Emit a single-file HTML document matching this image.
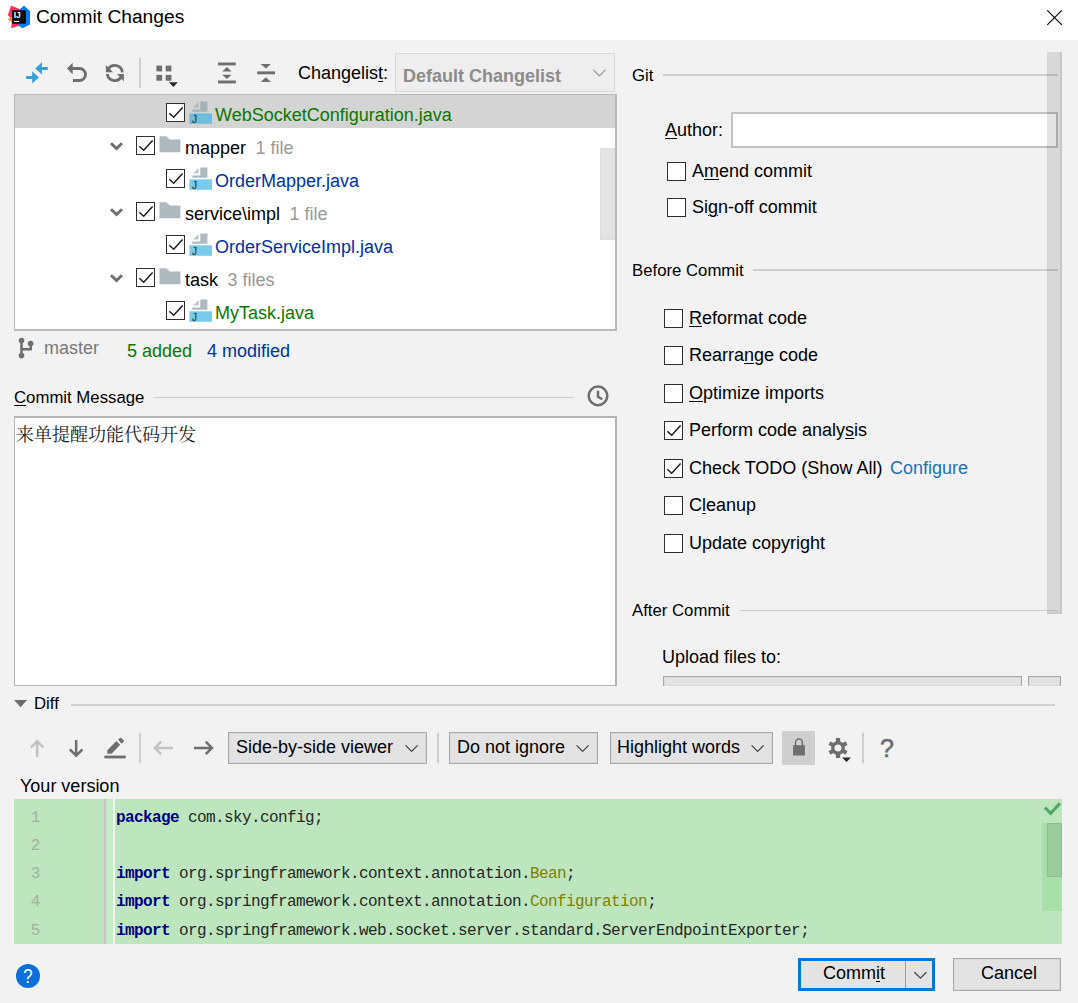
<!DOCTYPE html>
<html><head><meta charset="utf-8"><title>Commit Changes</title>
<style>
*{box-sizing:border-box;margin:0;padding:0}
html,body{width:1078px;height:1003px;overflow:hidden;background:#f2f2f2}
body{position:relative;font-family:"Liberation Sans","Noto Sans CJK SC",sans-serif;font-size:18px;color:#000}
.a{position:absolute}
.t{position:absolute;white-space:nowrap;line-height:22px;height:22px}
.s{font-size:16.750px}
.u{text-decoration:underline;text-underline-offset:2px;text-decoration-thickness:1px}
.hl{position:absolute;height:2px;background:#cfcfcf}
.h1{height:1px;background:#cdcdcd}
.cb{position:absolute;width:19px;height:19px;background:#fff;border:1px solid #2e2e2e}
.g{color:#0a7700}.b{color:#0032a0}.gr{color:#999}
.combo{position:absolute;background:#e3e3e3;border:1px solid #a9a9a9;box-shadow:inset 0 0 0 1px #d9d9d9}
.sep{position:absolute;width:2px;height:30px;background:#cecece}
.code{position:absolute;left:116px;font-family:"Liberation Mono",monospace;font-size:16px;letter-spacing:-0.600px;line-height:20px;height:20px;white-space:pre;color:#262626}
.kw{color:#000080;font-weight:bold}
.an{color:#808000}
.ln{position:absolute;left:28.500px;width:14px;font-family:"Liberation Mono",monospace;font-size:16px;line-height:20px;color:#9fb39f;text-align:center}
</style></head><body>
<div class="a" style="left:0;top:0;width:1078px;height:40px;background:#fff"></div>
<div class="t" style="left:36px;top:6px;font-size:19.200px">Commit Changes</div>
<div class="sep" style="left:139px;top:58px"></div>
<div class="t" style="left:298px;top:62px">Changelis<span class="u">t</span>:</div>
<div class="a" style="left:395px;top:53px;width:220px;height:39px;background:#eee;border:1px solid #dadada"></div>
<div class="t" style="left:403px;top:65px;font-weight:bold;color:#8c8c8c">Default Changelist</div>
<div class="a" style="left:14px;top:94px;width:603px;height:237px;background:#fff;border:1px solid #b9b9b9;border-width:1px 2px 2px 1px"></div>
<div class="a" style="left:15px;top:95px;width:600px;height:33px;background:#d4d4d4"></div>
<div class="a" style="left:600px;top:148px;width:15px;height:92px;background:#e3e3e3;border:1px solid #dddddd"></div>
<div class="t" style="left:44px;top:337px;color:#787878">master</div>
<div class="t g" style="left:127px;top:340px">5 added</div>
<div class="t b" style="left:207px;top:340px">4 modified</div>
<div class="t s" style="left:14px;top:387px"><span class="u">C</span>ommit Message</div>
<div class="hl h1" style="left:154px;top:397px;width:419px"></div>
<div class="a" style="left:14px;top:416px;width:603px;height:270px;background:#fff;border:1px solid #b4b4b4;border-width:2px 2px 1px 1px"></div>
<div class="t" style="left:16px;top:424px;font-family:'Liberation Serif','Noto Serif CJK SC',serif;font-size:18px;color:#222">来单提醒功能代码开发</div>
<div class="t s" style="left:632px;top:65px">Git</div>
<div class="hl" style="left:663px;top:74px;width:395px"></div>
<div class="t" style="left:665px;top:119px"><span class="u">A</span>uthor:</div>
<div class="a" style="left:731px;top:112px;width:327px;height:36px;background:#fff;border:2px solid #c2c2c2"></div>
<div class="t" style="left:692px;top:160px">A<span class="u">m</span>end commit</div>
<div class="t" style="left:692px;top:196px">Si<span class="u">g</span>n-off commit</div>
<div class="t s" style="left:632px;top:260px">Before Commit</div>
<div class="hl" style="left:753px;top:269px;width:305px"></div>
<div class="t" style="left:689px;top:307px"><span class="u">R</span>eformat code</div>
<div class="t" style="left:689px;top:344px">Rearra<span class="u">n</span>ge code</div>
<div class="t" style="left:689px;top:382px"><span class="u">O</span>ptimize imports</div>
<div class="t" style="left:689px;top:419px">Perform code analy<span class="u">s</span>is</div>
<div class="t" style="left:689px;top:457px">Check TODO (Show All) <span style="color:#2470b3;margin-left:2.500px">Configure</span></div>
<div class="t" style="left:689px;top:494px">C<span class="u">l</span>eanup</div>
<div class="t" style="left:689px;top:532px">Update copyright</div>
<div class="t s" style="left:632px;top:600px">After Commit</div>
<div class="hl h1" style="left:740px;top:610px;width:318px"></div>
<div class="t" style="left:662px;top:646px">Upload files to:</div>
<div class="combo" style="left:663px;top:676px;width:359px;height:10px;border-bottom:0"></div>
<div class="combo" style="left:1028px;top:676px;width:33px;height:10px;border-bottom:0"></div>
<div class="a" style="left:1047px;top:52px;width:15px;height:562px;background:rgba(0,0,0,.107);border-right:2px solid rgba(0,0,0,.08);border-bottom:2px solid rgba(0,0,0,.08)"></div>
<div class="t s" style="left:34px;top:693px">Diff</div>
<div class="hl" style="left:71px;top:704px;width:984px"></div>
<div class="sep" style="left:139px;top:733px"></div>
<div class="combo" style="left:228px;top:732px;width:199px;height:32px"></div>
<div class="t" style="left:236px;top:736px">Side-by-side viewer</div>
<div class="sep" style="left:437px;top:733px"></div>
<div class="combo" style="left:449px;top:732px;width:149px;height:32px"></div>
<div class="t" style="left:457px;top:736px">Do not ignore</div>
<div class="combo" style="left:610px;top:732px;width:163px;height:32px"></div>
<div class="t" style="left:617px;top:736px">Highlight words</div>
<div class="a" style="left:782px;top:731px;width:33px;height:33.500px;background:#cfcfcf"></div>
<div class="sep" style="left:862px;top:733px"></div>
<div class="t" style="left:880px;top:734px;font-size:25px;line-height:28px;height:28px;color:#6e6e6e;-webkit-text-stroke:0.600px #6e6e6e">?</div>
<div class="t" style="left:20px;top:775px">Your version</div>
<div class="a" style="left:14px;top:799px;width:1048px;height:145px;background:#bee6be"></div>
<div class="a" style="left:104px;top:799px;width:2px;height:145px;background:#c8c2c8"></div>
<div class="a" style="left:106px;top:799px;width:7px;height:145px;background:#c6e9c6"></div>
<div class="a" style="left:113px;top:799px;width:2px;height:145px;background:#f2faf2"></div>
<div class="ln" style="top:808px">1</div>
<div class="ln" style="top:836px">2</div>
<div class="ln" style="top:864px">3</div>
<div class="ln" style="top:892px">4</div>
<div class="ln" style="top:921px">5</div>
<div class="code" style="top:808px"><span class="kw">package</span> com.sky.config;</div>
<div class="code" style="top:864px"><span class="kw">import</span> org.springframework.context.annotation.<span class="an">Bean</span>;</div>
<div class="code" style="top:892px"><span class="kw">import</span> org.springframework.context.annotation.<span class="an">Configuration</span>;</div>
<div class="code" style="top:921px"><span class="kw">import</span> org.springframework.web.socket.server.standard.ServerEndpointExporter;</div>
<div class="a" style="left:1042px;top:823px;width:20px;height:88px;background:#a9dfa9"></div>
<div class="a" style="left:1047px;top:823px;width:15px;height:54px;background:#9ccb9c;border:1px solid #8fbc8f"></div>
<div class="a" style="left:16px;top:964px;width:24px;height:24px;border-radius:50%;background:#0b6fd9"></div>
<div class="t" style="left:16px;top:964px;width:24px;height:24px;line-height:24px;text-align:center;color:#fff;font-size:20px;transform:scaleX(.840)">?</div>
<div class="a" style="left:798px;top:958px;width:137px;height:33px;background:#e3e3e3;border:3px solid #0078d7"></div>
<div class="a" style="left:905px;top:961px;width:1px;height:27px;background:#6aa9e0"></div>
<div class="t" style="left:823px;top:962px">Comm<span class="u">i</span>t</div>
<div class="combo" style="left:953px;top:958px;width:108px;height:33px"></div>
<div class="t" style="left:981px;top:962px">Cancel</div>
<div class="cb" style="left:166px;top:103px"></div>
<div class="t g" style="left:215px;top:104px">WebSocketConfiguration.java</div>
<div class="cb" style="left:136px;top:136px"></div>
<div class="t" style="left:185px;top:137px">mapper<span class="gr" style="margin-left:9.500px">1 file</span></div>
<div class="cb" style="left:166px;top:169px"></div>
<div class="t b" style="left:215px;top:170px">OrderMapper.java</div>
<div class="cb" style="left:136px;top:202px"></div>
<div class="t" style="left:185px;top:203px">service\impl<span class="gr" style="margin-left:9.500px">1 file</span></div>
<div class="cb" style="left:166px;top:235px"></div>
<div class="t b" style="left:215px;top:236px">OrderServiceImpl.java</div>
<div class="cb" style="left:136px;top:268px"></div>
<div class="t" style="left:185px;top:269px">task<span class="gr" style="margin-left:9.500px">3 files</span></div>
<div class="cb" style="left:166px;top:301px"></div>
<div class="t g" style="left:215px;top:302px">MyTask.java</div>
<div class="cb" style="left:667px;top:162px"></div>
<div class="cb" style="left:667px;top:198px"></div>
<div class="cb" style="left:664px;top:309px"></div>
<div class="cb" style="left:664px;top:346px"></div>
<div class="cb" style="left:664px;top:384px"></div>
<div class="cb" style="left:664px;top:421px"></div>
<div class="cb" style="left:664px;top:459px"></div>
<div class="cb" style="left:664px;top:496px"></div>
<div class="cb" style="left:664px;top:534px"></div>
<svg class="a" style="left:0;top:0" width="1078" height="1003" viewBox="0 0 1078 1003">
<path d="M169.3 113.2L173.7 117.2L182.6 107.4" stroke="#1e1e1e" stroke-width="1.5" fill="none"/>
<path d="M192.3 111.8V109.4H200.3V101.6H207.4V111.8Z" fill="#9aa7b0" fill-opacity=".800"/><path d="M198.6 101.9V107.5H193.0Z" fill="#9aa7b0" fill-opacity=".650"/><rect x="189.4" y="113.3" width="22.600" height="10.500" fill="#40b6e0" fill-opacity=".700"/><text x="191.9" y="123.1" font-family="Liberation Sans,sans-serif" font-size="10" fill="#231f20" fill-opacity=".750" stroke="#231f20" stroke-width=".350" stroke-opacity=".700">J</text>
<path d="M111 143.20000000000002L116.5 148.5L122 143.20000000000002" stroke="#6e6e6e" stroke-width="2.9" fill="none"/>
<path d="M139.3 146.2L143.7 150.2L152.6 140.4" stroke="#1e1e1e" stroke-width="1.5" fill="none"/>
<path d="M159.5 136.3H166.5L169.7 139.4H180.4V152.2H159.5Z" fill="#aeb9c0"/>
<path d="M169.3 179.2L173.7 183.2L182.6 173.4" stroke="#1e1e1e" stroke-width="1.5" fill="none"/>
<path d="M192.3 177.8V175.4H200.3V167.6H207.4V177.8Z" fill="#9aa7b0" fill-opacity=".800"/><path d="M198.6 167.9V173.5H193.0Z" fill="#9aa7b0" fill-opacity=".650"/><rect x="189.4" y="179.3" width="22.600" height="10.500" fill="#40b6e0" fill-opacity=".700"/><text x="191.9" y="189.1" font-family="Liberation Sans,sans-serif" font-size="10" fill="#231f20" fill-opacity=".750" stroke="#231f20" stroke-width=".350" stroke-opacity=".700">J</text>
<path d="M111 209.20000000000002L116.5 214.5L122 209.20000000000002" stroke="#6e6e6e" stroke-width="2.9" fill="none"/>
<path d="M139.3 212.2L143.7 216.2L152.6 206.4" stroke="#1e1e1e" stroke-width="1.5" fill="none"/>
<path d="M159.5 202.3H166.5L169.7 205.4H180.4V218.2H159.5Z" fill="#aeb9c0"/>
<path d="M169.3 245.2L173.7 249.2L182.6 239.4" stroke="#1e1e1e" stroke-width="1.5" fill="none"/>
<path d="M192.3 243.8V241.4H200.3V233.6H207.4V243.8Z" fill="#9aa7b0" fill-opacity=".800"/><path d="M198.6 233.9V239.5H193.0Z" fill="#9aa7b0" fill-opacity=".650"/><rect x="189.4" y="245.3" width="22.600" height="10.500" fill="#40b6e0" fill-opacity=".700"/><text x="191.9" y="255.1" font-family="Liberation Sans,sans-serif" font-size="10" fill="#231f20" fill-opacity=".750" stroke="#231f20" stroke-width=".350" stroke-opacity=".700">J</text>
<path d="M111 275.2L116.5 280.5L122 275.2" stroke="#6e6e6e" stroke-width="2.9" fill="none"/>
<path d="M139.3 278.2L143.7 282.2L152.6 272.4" stroke="#1e1e1e" stroke-width="1.5" fill="none"/>
<path d="M159.5 268.3H166.5L169.7 271.4H180.4V284.2H159.5Z" fill="#aeb9c0"/>
<path d="M169.3 311.2L173.7 315.2L182.6 305.4" stroke="#1e1e1e" stroke-width="1.5" fill="none"/>
<path d="M192.3 309.8V307.4H200.3V299.6H207.4V309.8Z" fill="#9aa7b0" fill-opacity=".800"/><path d="M198.6 299.9V305.5H193.0Z" fill="#9aa7b0" fill-opacity=".650"/><rect x="189.4" y="311.3" width="22.600" height="10.500" fill="#40b6e0" fill-opacity=".700"/><text x="191.9" y="321.1" font-family="Liberation Sans,sans-serif" font-size="10" fill="#231f20" fill-opacity=".750" stroke="#231f20" stroke-width=".350" stroke-opacity=".700">J</text>
<path d="M667.3 431.2L671.7 435.2L680.6 425.4" stroke="#1e1e1e" stroke-width="1.5" fill="none"/>
<path d="M667.3 469.2L671.7 473.2L680.6 463.4" stroke="#1e1e1e" stroke-width="1.5" fill="none"/>
<g fill="#389fd6"><path d="M35.2 68.5L41.9 62.300V67H47.8V70H41.9V74.600Z"/><path d="M38.9 77.500L32.200 71.200V76H26.100V79H32.200V83.500Z"/></g>
<path d="M67 68.500L72.700 62.800V74.200Z" fill="#6e6e6e"/><path d="M72 68.500H79.500A6 6 0 0 1 79.500 80.500H73" stroke="#6e6e6e" stroke-width="2.8" fill="none"/>
<g stroke="#6e6e6e" stroke-width="2.8" fill="none"><path d="M108.300 69A7.700 7.700 0 0 1 122.400 72.300"/><path d="M121.300 77A7.700 7.700 0 0 1 107.200 74"/></g><path d="M105.900 65.100V72.300H113.100Z" fill="#6e6e6e"/><path d="M123.900 81.200V74H117Z" fill="#6e6e6e"/>
<g fill="#6e6e6e"><rect x="156.400" y="65.600" width="5.700" height="5.800"/><rect x="165.700" y="65.600" width="5.700" height="5.800"/><rect x="156.400" y="74.900" width="5.700" height="5.800"/><rect x="165.700" y="74.900" width="5.700" height="5.800"/></g><path d="M168.900 82.200H177.800L173.350 86.900Z" fill="#2b2b2b"/>
<g fill="#6e6e6e"><rect x="218" y="62.500" width="17.800" height="2.900"/><rect x="218" y="80.500" width="17.800" height="2.900"/><path d="M226.900 67L231.600 71.500H222.200Z"/><path d="M226.900 79L231.600 74.800H222.200Z"/></g>
<g fill="#6e6e6e"><rect x="257.200" y="71.400" width="17.800" height="2.900"/><path d="M260.600 64.100H271L265.800 68.600Z"/><path d="M260.600 81.900H271L265.800 77.300Z"/></g>
<path d="M593.4 69.9L599.4 75.9L605.4 69.9" stroke="#9a9a9a" stroke-width="1.3" fill="none"/>
<path d="M1047.300 10.300L1061.800 24.800M1061.800 10.300L1047.300 24.800" stroke="#000" stroke-width="1.15" fill="none"/>
<g><polygon points="11.100,5.600 19.800,9.200 19.800,25.600 11,28.200 12.200,20 7.800,15.200" fill="#fe315d"/><polygon points="7.800,19.200 12.200,16 12.200,22.500" fill="#fc801d"/><polygon points="23.900,5.800 30,11.100 30,24.500 22.300,28.200 18.400,25.600 19.800,9.200" fill="#087cfa"/><rect x="12.100" y="10.200" width="13.800" height="13.500" fill="#0a0a0a"/><rect x="13.900" y="20.900" width="5.300" height="1.100" fill="#fff"/><text x="13.700" y="17.900" font-family="Liberation Sans,sans-serif" font-weight="bold" font-size="8.400" fill="#fff">IJ</text></g>
<g stroke="#6e6e6e" stroke-width="2.500" fill="none"><path d="M21.500 340.500V355.600"/><path d="M30.700 343.500V349.350H21.500"/></g><g fill="#6e6e6e"><circle cx="21.500" cy="340.500" r="2.800"/><circle cx="21.500" cy="355.600" r="2.800"/><circle cx="30.600" cy="343.500" r="2.800"/></g>
<circle cx="598" cy="395.850" r="9.300" stroke="#6e6e6e" stroke-width="2.500" fill="none"/><path d="M598 390.800V396.700L602.300 399.300" stroke="#6e6e6e" stroke-width="2.500" fill="none"/>
<path d="M14.100 700H27L20.550 707.300Z" fill="#6e6e6e"/>
<path d="M37.150 757V741.500M30.900 747.600L37.150 741.300L43.400 747.600" stroke="#c3c3c3" stroke-width="2.500" fill="none"/>
<path d="M76.150 740V755.500M69.900 749.400L76.150 755.700L82.400 749.400" stroke="#6e6e6e" stroke-width="2.500" fill="none"/>
<g fill="#6e6e6e"><path d="M107.300 750.200L116.400 741.100L120.100 744.800L111.600 753.700H107.300Z"/><path d="M118.100 739.600L120 737.900Q120.600 737.500 121.200 738L123.800 740.400Q124.200 741 123.800 741.500L121.500 743.700Z"/><rect x="104.400" y="755.600" width="21.300" height="2.800"/></g>
<path d="M173 747.950H155.500M161.200 741.700L154.900 747.950L161.200 754.200" stroke="#c3c3c3" stroke-width="2.500" fill="none"/>
<path d="M193.900 747.950H211.400M205.700 741.700L212 747.950L205.700 754.200" stroke="#6e6e6e" stroke-width="2.500" fill="none"/>
<path d="M405.59999999999997 745.4L411.59999999999997 751.4L417.59999999999997 745.4" stroke="#444" stroke-width="1.3" fill="none"/>
<path d="M576.6 745.4L582.6 751.4L588.6 745.4" stroke="#444" stroke-width="1.3" fill="none"/>
<path d="M751.6 745.4L757.6 751.4L763.6 745.4" stroke="#444" stroke-width="1.3" fill="none"/>
<rect x="793.100" y="745.200" width="11.800" height="10.300" fill="#6e6e6e"/><path d="M795.600 746V742.400A3.400 3.400 0 0 1 802.400 742.400V746" stroke="#6e6e6e" stroke-width="1.500" fill="none"/>
<g transform="translate(838,748)"><circle r="5.250" stroke="#6e6e6e" stroke-width="3.300" fill="none"/><g fill="#6e6e6e"><rect x="-2.100" y="-9.900" width="4.200" height="3.800" rx="0.500" transform="rotate(0)"/><rect x="-2.100" y="-9.900" width="4.200" height="3.800" rx="0.500" transform="rotate(60)"/><rect x="-2.100" y="-9.900" width="4.200" height="3.800" rx="0.500" transform="rotate(120)"/><rect x="-2.100" y="-9.900" width="4.200" height="3.800" rx="0.500" transform="rotate(180)"/><rect x="-2.100" y="-9.900" width="4.200" height="3.800" rx="0.500" transform="rotate(240)"/><rect x="-2.100" y="-9.900" width="4.200" height="3.800" rx="0.500" transform="rotate(300)"/></g></g><path d="M842.100 757.400H851L846.550 762Z" fill="#2b2b2b"/>
<path d="M1045 807.600L1050.700 813.300L1060 803.400" stroke="#52a865" stroke-width="3.100" fill="none"/>
<path d="M914.4 972.1999999999999L920.4 978.1999999999999L926.4 972.1999999999999" stroke="#444" stroke-width="1.3" fill="none"/>
</svg>
</body></html>
